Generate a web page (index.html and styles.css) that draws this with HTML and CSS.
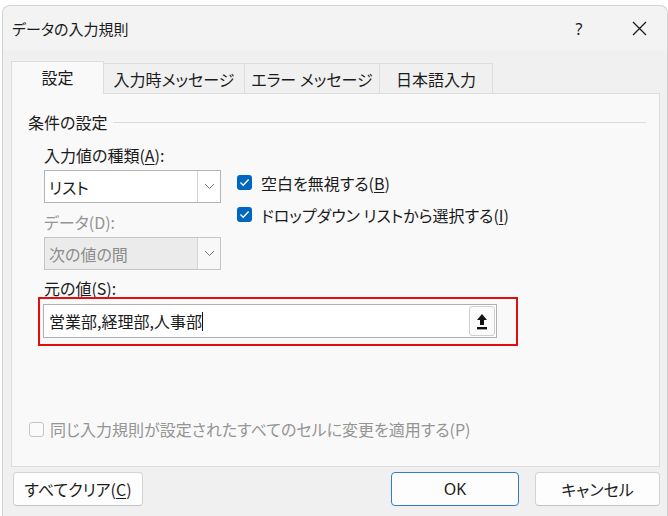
FILE: index.html
```html
<!DOCTYPE html>
<html lang="ja">
<head>
<meta charset="utf-8">
<title>データの入力規則</title>
<link rel="stylesheet" href="styles.css">
</head>
<body>
<div class="dialog">
  <div class="titlebar">
    <span class="title">データの入力規則</span>
    <span class="help">?</span>
    <span class="close">
      <svg width="15" height="15" viewBox="0 0 15 15"><path d="M1 1L14 14M14 1L1 14" stroke="#1a1a1a" stroke-width="1.3" fill="none"/></svg>
    </span>
  </div>

  <div class="tabs">
    <div class="tab active">設定</div>
    <div class="tab t2">入力時メッセージ</div>
    <div class="tab t3">エラー メッセージ</div>
    <div class="tab t4">日本語入力</div>
  </div>

  <div class="panel">
    <div class="legend"><span>条件の設定</span><span class="rule"></span></div>
    <div class="grid">
      <div class="leftcol">
        <div class="label l1">入力値の種類(<u>A</u>):</div>
        <div class="select">
          <span class="val">リスト</span>
          <span class="drop"><svg width="11" height="7" viewBox="0 0 11 7"><path d="M1 1L5.5 5.5L10 1" stroke="#7a7a7a" stroke-width="1" fill="none"/></svg></span>
        </div>
        <div class="label l2 dim">データ(D):</div>
        <div class="select disabled">
          <span class="val">次の値の間</span>
          <span class="drop"><svg width="11" height="7" viewBox="0 0 11 7"><path d="M1 1L5.5 5.5L10 1" stroke="#7a7a7a" stroke-width="1" fill="none"/></svg></span>
        </div>
      </div>
      <div class="rightcol">
        <div class="check">
          <span class="box on"><svg width="11" height="9" viewBox="0 0 11 9"><path d="M1.5 4.6L4.2 7.2L9.6 1.6" stroke="#fff" stroke-width="1.4" fill="none"/></svg></span>
          <span>空白を無視する(<u>B</u>)</span>
        </div>
        <div class="check">
          <span class="box on"><svg width="11" height="9" viewBox="0 0 11 9"><path d="M1.5 4.6L4.2 7.2L9.6 1.6" stroke="#fff" stroke-width="1.4" fill="none"/></svg></span>
          <span>ドロップダウン リストから選択する(<u>I</u>)</span>
        </div>
      </div>
    </div>
    <div class="label l3">元の値(S):</div>
    <div class="redbox">
      <div class="input">
        <span class="text">営業部,経理部,人事部</span><span class="caret"></span>
        <span class="upbtn"><svg width="12" height="17" viewBox="0 0 12 17"><path d="M6 1L1 7H4V12H8V7H11Z" fill="#111"/><rect x="1" y="14" width="10" height="2.4" fill="#111"/></svg></span>
      </div>
    </div>
    <div class="check bottom dim">
      <span class="box off"></span>
      <span>同じ入力規則が設定されたすべてのセルに変更を適用する(P)</span>
    </div>
  </div>

  <div class="footer">
    <div class="btn clear">すべてクリア(<u>C</u>)</div>
    <div class="spacer"></div>
    <div class="btn ok">OK</div>
    <div class="btn cancel">キャンセル</div>
  </div>
</div>
</body>
</html>
```

FILE: styles.css
```css
html, body {
  margin: 0;
  padding: 0;
  background: #ffffff;
}
body {
  font-family: "Noto Sans CJK JP", "Noto Sans", sans-serif;
  font-feature-settings: "palt";
  color: #1b1b1b;
  font-size: 16px;
  overflow: hidden;
  width: 668px;
  height: 516px;
}
u {
  text-decoration: underline;
  text-underline-offset: 2px;
}
.dialog {
  margin: 5px 0 0 2px;
  width: 666px;
  height: 520px;
  background: #f0f0f0;
  border: 1px solid #d2d2d2;
  border-bottom: none;
  border-radius: 8px 8px 0 0;
  box-sizing: border-box;
  display: flex;
  flex-direction: column;
}
.titlebar {
  height: 44px;
  display: flex;
  align-items: center;
  background: #f3f3f3;
  border-radius: 8px 8px 0 0;
  flex-shrink: 0;
}
.title {
  font-size: 15px;
  margin-left: 9px;
  flex: 1;
  line-height: 20px;
  padding-top: 1px;
}
.help {
  font-size: 16px;
  width: 20px;
  text-align: center;
  margin-right: 43px;
  font-family: "Noto Sans", sans-serif;
  padding-top: 1px;
}
.close {
  display: flex;
  margin-right: 20px;
}
.tabs {
  display: flex;
  align-items: flex-end;
  margin: 11px 0 0 8px;
  height: 32px;
  flex-shrink: 0;
  position: relative;
  z-index: 1;
}
.tab {
  height: 30px;
  box-sizing: border-box;
  border: 1px solid #dddddd;
  border-bottom: none;
  border-left: none;
  background: #f0f0f0;
  display: flex;
  align-items: center;
  justify-content: center;
  font-size: 16px;
  line-height: 20px;
}
.tab.active {
  width: 93px;
  height: 33px;
  margin-bottom: -1px;
  background: #f9f9f9;
  border-left: 1px solid #dddddd;
  padding-bottom: 2px;
}
.t2 { width: 141px; }
.t3 { width: 135px; }
.t4 { width: 113px; }
.panel {
  margin: 0 7px 0 8px;
  height: 374px;
  box-sizing: border-box;
  background: #f9f9f9;
  border: 1px solid #dddddd;
  display: flex;
  flex-direction: column;
  padding: 18px 0 0 16px;
  flex-shrink: 0;
}
.legend {
  display: flex;
  align-items: center;
  line-height: 20px;
  height: 20px;
  margin-right: 13px;
}
.rule {
  flex: 1;
  height: 1px;
  background: #dcdcdc;
  margin-left: 6px;
}
.grid {
  display: flex;
  padding-left: 16px;
  gap: 16px;
  margin-top: 13px;
}
.leftcol {
  width: 177px;
  display: flex;
  flex-direction: column;
}
.label {
  line-height: 20px;
  height: 20px;
}
.dim { color: #949494; }
.select {
  margin-top: 5px;
  height: 33px;
  box-sizing: border-box;
  border: 1px solid #b4b4b4;
  background: #ffffff;
  display: flex;
  align-items: center;
}
.select .val {
  flex: 1;
  padding-left: 4px;
  line-height: 20px;
}
.select .drop {
  width: 22px;
  align-self: stretch;
  border-left: 1px solid #d4d4d4;
  display: flex;
  align-items: center;
  justify-content: center;
  background: #ffffff;
}
.select.disabled {
  background: #ebebeb;
  border-color: #c6c6c6;
  color: #8c8c8c;
}
.select.disabled .drop {
  background: #f8f8f8;
}
.l2 { margin-top: 9px; }
.rightcol {
  padding-top: 25px;
  display: flex;
  flex-direction: column;
  gap: 7px;
}
.check {
  display: flex;
  align-items: center;
  height: 25px;
  line-height: 20px;
}
.box {
  width: 15px;
  height: 15px;
  box-sizing: border-box;
  border-radius: 3px;
  margin-right: 9px;
  display: flex;
  align-items: center;
  justify-content: center;
  flex-shrink: 0;
}
.box.on {
  background: #0067c0;
}
.box.off {
  border: 1px solid #c4c4c4;
  background: #fbfbfb;
  margin-right: 6px;
}
.l3 {
  margin: 9px 0 0 16px;
  height: 18px;
  line-height: 18px;
}
.redbox {
  margin: 0 0 0 10px;
  width: 480px;
  height: 49px;
  box-sizing: border-box;
  border: 2px solid #e01010;
  padding: 5px 0 0 3px;
}
.input {
  width: 454px;
  height: 34px;
  box-sizing: border-box;
  border: 1px solid #b0b0b0;
  background: #ffffff;
  display: flex;
  align-items: center;
  padding-left: 5px;
}
.input .text {
  line-height: 20px;
}
.caret {
  width: 1px;
  height: 19px;
  background: #111;
  margin-left: 0px;
}
.upbtn {
  margin-left: auto;
  margin-right: 1px;
  width: 26px;
  height: 30px;
  box-sizing: border-box;
  border: 1px solid #cfcfcf;
  border-radius: 3px;
  background: #fbfbfb;
  display: flex;
  align-items: center;
  justify-content: center;
}
.check.bottom {
  margin-top: auto;
  margin-bottom: 27px;
  height: 20px;
  margin-left: 1px;
}
.footer {
  display: flex;
  margin-top: 5px;
  padding: 0 7px 0 10px;
  gap: 16px;
}
.spacer { flex: 1; }
.btn {
  height: 34px;
  box-sizing: border-box;
  border: 1px solid #d3d3d3;
  border-bottom-color: #c2c2c2;
  border-radius: 4px;
  background: #fdfdfd;
  display: flex;
  align-items: center;
  justify-content: center;
  line-height: 20px;
}
.clear { width: 130px; }
.ok {
  width: 128px;
  border: 1px solid #2f7fc8;
  font-family: "Noto Sans", sans-serif;
}
.cancel { width: 125px; }
```
